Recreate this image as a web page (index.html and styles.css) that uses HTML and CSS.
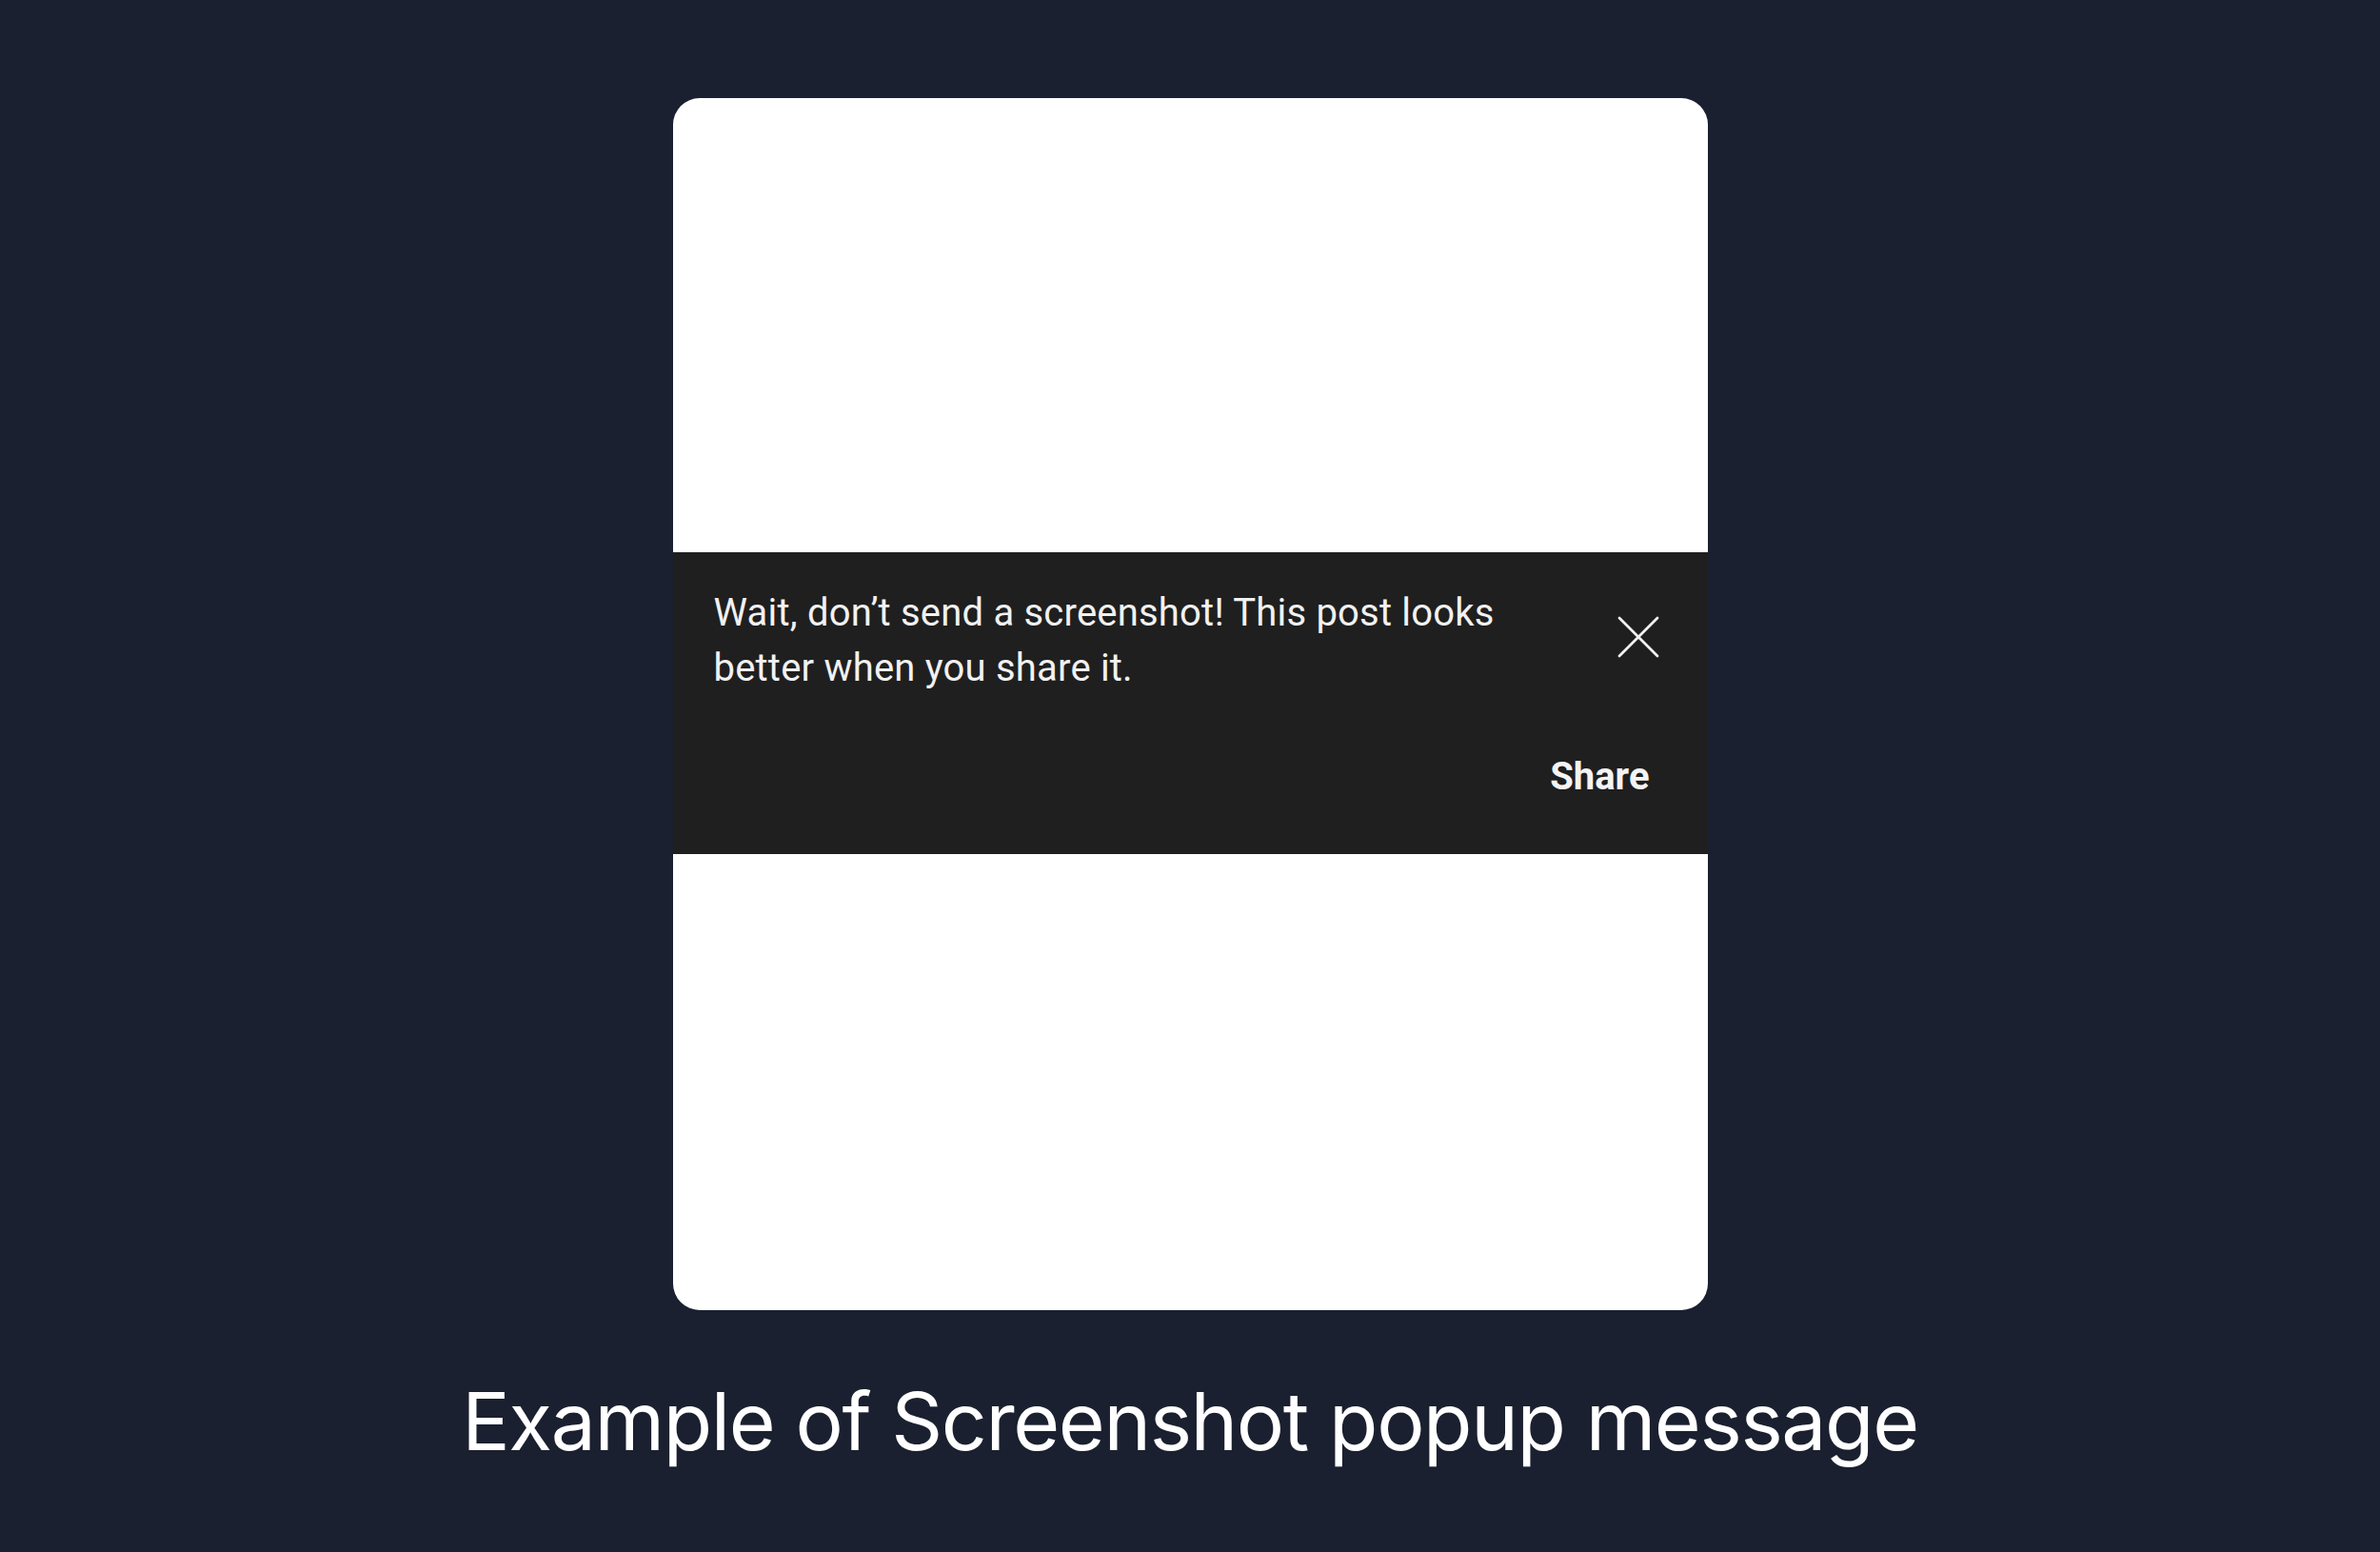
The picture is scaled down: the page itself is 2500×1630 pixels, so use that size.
FILE: index.html
```html
<!DOCTYPE html>
<html lang="en">
<head>
<meta charset="utf-8">
<title>Screenshot popup message</title>
<link rel="stylesheet" href="styles.css">
</head>
<body>
<main class="page">
  <section class="card">
    <div class="card-blank card-blank-top"></div>
    <div class="popup">
      <div class="popup-row">
        <p class="popup-text">Wait, don’t send a screenshot! This post looks better when you share it.</p>
        <button class="popup-close" aria-label="Close">
          <svg viewBox="0 0 44 44" width="44" height="44" aria-hidden="true">
            <path d="M2 2 L42 42 M42 2 L2 42" stroke="#f2f2f2" stroke-width="2.8" stroke-linecap="round" fill="none"/>
          </svg>
        </button>
      </div>
      <div class="popup-actions">
        <button class="popup-share">Share</button>
      </div>
    </div>
    <div class="card-blank"></div>
  </section>
  <h1 class="caption">Example of Screenshot popup message</h1>
</main>
</body>
</html>
```
FILE: styles.css
```css
html, body {
  margin: 0;
  padding: 0;
}
body {
  background: #1b2030;
  width: 2500px;
  height: 1630px;
  overflow: hidden;
}
.page {
  display: flex;
  flex-direction: column;
  align-items: center;
  padding-top: 103px;
}
.card {
  width: 1087px;
  height: 1273px;
  background: #ffffff;
  border-radius: 28px;
  overflow: hidden;
  display: flex;
  flex-direction: column;
}
.card-blank {
  flex: 1;
}
.card-blank-top {
  flex: 0 0 477px;
}
.popup {
  background: #1f1f1f;
  padding: 35px 51px 57px 43px;
  display: flex;
  flex-direction: column;
  font-family: Roboto, "Liberation Sans", sans-serif;
  color: #f1f1f1;
}
.popup-row {
  display: flex;
  justify-content: space-between;
  align-items: flex-start;
}
.popup-text {
  margin: 0;
  width: 880px;
  font-size: 40px;
  line-height: 58px;
  font-weight: 400;
  letter-spacing: 0.2px;
}
.popup-close {
  margin-top: 32px;
  padding: 0;
  border: 0;
  background: none;
  width: 44px;
  height: 44px;
  display: block;
}
.popup-close svg {
  display: block;
}
.popup-actions {
  display: flex;
  justify-content: flex-end;
  margin-top: 61px;
}
.popup-share {
  margin: 0 10px 0 0;
  padding: 0;
  border: 0;
  background: none;
  color: #f4f4f4;
  font-family: Roboto, "Liberation Sans", sans-serif;
  font-weight: 700;
  font-size: 40px;
  line-height: 48px;
}
.caption {
  margin: 67px 0 0 0;
  font-family: Inter, "Liberation Sans", sans-serif;
  font-weight: 400;
  font-size: 84px;
  line-height: 1.2;
  color: #ffffff;
  letter-spacing: -1.4px;
  white-space: nowrap;
}
```
